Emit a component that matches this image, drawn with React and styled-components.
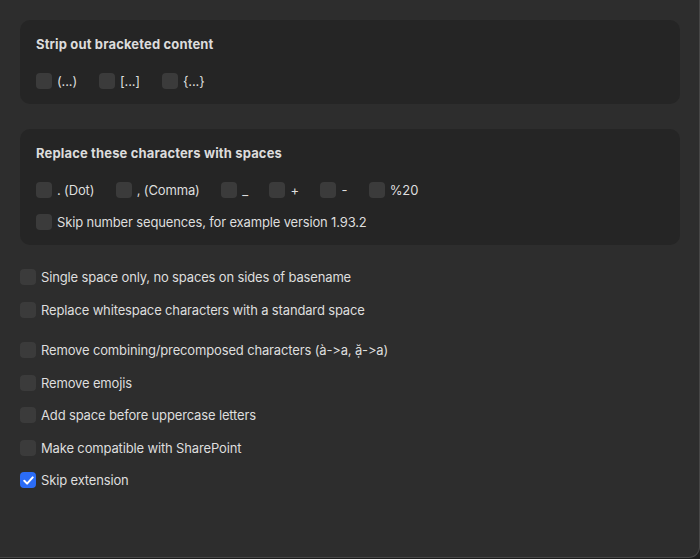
import React, { useState } from 'react';
import styled, { createGlobalStyle } from 'styled-components';

const GlobalStyle = createGlobalStyle`
  html, body {
    margin: 0;
    padding: 0;
    background: #1e1e1e;
  }
  body {
    font-family: Inter, "Liberation Sans", sans-serif;
    font-feature-settings: "calt" 0, "liga" 0;
    -webkit-font-smoothing: antialiased;
  }
`;

const bracketOptions = [
  { id: 'round', label: '(...)' },
  { id: 'square', label: '[...]' },
  { id: 'curly', label: '{...}' },
];

const replaceOptions = [
  { id: 'dot', label: '. (Dot)' },
  { id: 'comma', label: ', (Comma)' },
  { id: 'underscore', label: '_' },
  { id: 'plus', label: '+' },
  { id: 'dash', label: '-' },
  { id: 'pct', label: '%20' },
];

const App = () => {
  const [checked, setChecked] = useState({ skipExt: true });
  const toggle = id => setChecked(prev => ({ ...prev, [id]: !prev[id] }));

  const renderCheck = (id, label) => (
    <Check key={id} onClick={() => toggle(id)}>
      <Box $on={!!checked[id]}>
        {checked[id] && (
          <svg width="11" height="9" viewBox="0 0 11 9">
            <path d="M1.3 4.8 L4.1 7.6 L9.7 1.4" fill="none" stroke="#fff" strokeWidth="2" strokeLinecap="round" strokeLinejoin="round" />
          </svg>
        )}
      </Box>
      <Label>{label}</Label>
    </Check>
  );

  return (
    <>
      <GlobalStyle />
      <Window>
        <Panel>
          <Title>Strip out bracketed content</Title>
          <InlineRow $gap={22}>{bracketOptions.map(o => renderCheck(o.id, o.label))}</InlineRow>
        </Panel>

        <Panel $top={24.5}>
          <Title>Replace these characters with spaces</Title>
          <InlineRow $gap={21.5}>{replaceOptions.map(o => renderCheck(o.id, o.label))}</InlineRow>
          <InlineRow>{renderCheck('skipNum', 'Skip number sequences, for example version 1.93.2')}</InlineRow>
        </Panel>

        <List $top={24.5}>
          {renderCheck('single', 'Single space only, no spaces on sides of basename')}
          {renderCheck('whitespace', 'Replace whitespace characters with a standard space')}
        </List>

        <List $top={24.5}>
          {renderCheck('combining', 'Remove combining/precomposed characters (à->a, ặ->a)')}
          {renderCheck('emoji', 'Remove emojis')}
          {renderCheck('upper', 'Add space before uppercase letters')}
          {renderCheck('sharepoint', 'Make compatible with SharePoint')}
          {renderCheck('skipExt', 'Skip extension')}
        </List>
      </Window>
    </>
  );
};

export default App;

const Window = styled.div`
  box-sizing: border-box;
  width: 700px;
  height: 558px;
  background: #2d2d2d;
  border-right: 1px solid #474747;
  border-bottom: 1px solid #474747;
  border-bottom-right-radius: 11px;
  padding: 20px 19px 0 20px;
  display: flex;
  flex-direction: column;
`;

const Panel = styled.section`
  background: #252525;
  border-radius: 10px;
  margin-top: ${p => p.$top || 0}px;
  padding: 16px 16px 15px;
  display: flex;
  flex-direction: column;
  gap: 16px;
`;

const Title = styled.h2`
  margin: 0 0 4px;
  font-size: 13px;
  font-weight: 700;
  letter-spacing: 0.15px;
  color: #dcdcdc;
  line-height: 17px;
`;

const InlineRow = styled.div`
  display: flex;
  align-items: center;
  gap: ${p => p.$gap || 0}px;
`;

const List = styled.div`
  display: flex;
  flex-direction: column;
  gap: 16.5px;
  margin-top: ${p => p.$top || 24}px;
`;

const Check = styled.label`
  display: flex;
  align-items: center;
  gap: 5px;
  height: 16px;
  cursor: default;
`;

const Box = styled.span`
  width: 16px;
  height: 16px;
  flex: none;
  border-radius: 4px;
  background: ${p => (p.$on ? '#2b6cf6' : '#3b3b3b')};
  display: flex;
  align-items: center;
  justify-content: center;
`;

const Label = styled.span`
  font-size: 13px;
  letter-spacing: -0.15px;
  color: #dedede;
  line-height: 16px;
  white-space: nowrap;
`;
